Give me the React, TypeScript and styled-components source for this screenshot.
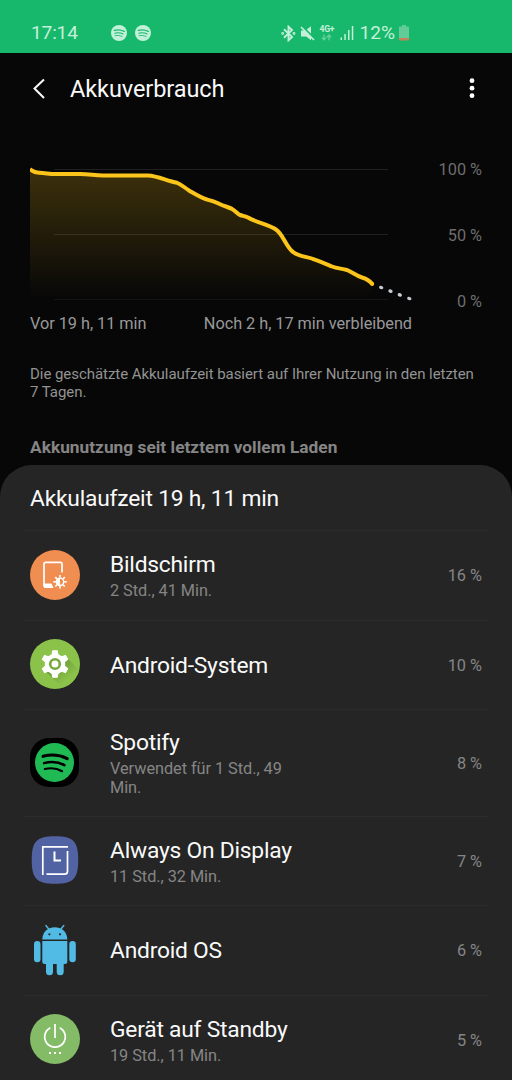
import React from 'react';
import styled, { createGlobalStyle } from 'styled-components';

const GlobalStyle = createGlobalStyle`
  * { box-sizing: border-box; }
  html, body { margin: 0; background: #070707; overflow: hidden; }
  body { font-family: Roboto, "Liberation Sans", sans-serif; color: #fafafa; }
  svg { display: block; flex: none; }
`;

const Screen = styled.div`
  width: 512px;
  height: 1080px;
  overflow: hidden;
  background: #070707;
  display: flex;
  flex-direction: column;
`;

const StatusBar = styled.header`
  flex: none;
  height: 53px;
  padding: 13px 103px 0 31px;
  background: #18b86c;
  color: #c3f0d8;
  display: flex;
  align-items: center;
`;

const StatusText = styled.span<{ $spacing?: number }>`
  font-size: 19.2px;
  letter-spacing: ${(p) => p.$spacing ?? 0}px;
  line-height: 24px;
  white-space: nowrap;
`;

const Notifications = styled.div`
  display: flex;
  gap: 8px;
  margin-left: 33px;
`;

const StatusIcons = styled.div`
  display: flex;
  align-items: center;
  gap: 4px;
  margin-left: auto;
`;

const Network = styled.div`
  display: flex;
  flex-direction: column;
  align-items: center;
  width: 15px;
  margin-right: 2px;
  font-size: 8.6px;
  font-weight: 700;
  letter-spacing: -0.3px;
  line-height: 9px;
`;

const AppBar = styled.div`
  flex: none;
  height: 72px;
  padding: 0 36px 0 32px;
  display: flex;
  align-items: center;
`;

const Title = styled.h1`
  flex: 1;
  margin: 0 0 0 24px;
  font-size: 23.5px;
  font-weight: 400;
  letter-spacing: -0.08px;
  line-height: 30px;
`;

const ChartSection = styled.section`
  flex: none;
  height: 187px;
  padding: 35px 30px 0;
`;

const Chart = styled.div`
  display: flex;
  justify-content: space-between;
`;

const Scale = styled.div`
  display: flex;
  flex-direction: column;
  justify-content: space-between;
  height: 152px;
  text-align: right;
  font-size: 16.3px;
  line-height: 20px;
  color: #6d6d6d;
`;

const TimeAxis = styled.div`
  display: flex;
  justify-content: space-between;
  width: 382px;
  margin-top: 2px;
  font-size: 16.3px;
  letter-spacing: -0.03px;
  line-height: 20px;
  color: #999;
  white-space: nowrap;
`;

const Note = styled.p`
  flex: none;
  height: 36px;
  margin: 53px 30px 0;
  font-size: 15px;
  letter-spacing: -0.05px;
  line-height: 18px;
  color: #939393;
`;

const SectionTitle = styled.h2`
  flex: none;
  margin: 36px 30px 8px;
  font-size: 17.3px;
  font-weight: 700;
  letter-spacing: 0.02px;
  line-height: 20px;
  color: #858585;
`;

const Panel = styled.section`
  flex: none;
  height: 630px;
  padding: 0 24px;
  background: #252525;
  border-radius: 32px 32px 0 0;
`;

const PanelTitle = styled.h3`
  height: 65px;
  margin: 0;
  padding: 0 6px;
  font-size: 22.8px;
  font-weight: 400;
  letter-spacing: -0.21px;
  line-height: 67px;
`;

const Row = styled.div<{ $height: number }>`
  height: ${(p) => p.$height}px;
  padding: 0 6px 2px;
  border-top: 1px solid #2b2b2b;
  display: flex;
  align-items: center;
`;

const RowText = styled.div`
  width: 200px;
  margin-left: 30px;
  padding-top: 1px;
`;

const RowName = styled.div`
  font-size: 22.8px;
  letter-spacing: -0.22px;
  line-height: 29px;
  white-space: nowrap;

  &:only-child {
    padding-top: 1px;
  }
`;

const RowDetail = styled.div`
  width: 180px;
  font-size: 16.3px;
  letter-spacing: -0.04px;
  line-height: 19px;
  padding-top: 2px;
  color: #858585;
`;

const Percent = styled.div`
  margin-left: auto;
  padding-top: 2px;
  font-size: 16.3px;
  color: #858585;
`;

function SpotifyMark({ size, disc, waves }: { size: number; disc: string; waves: string }) {
  return (
    <svg width={size} height={size} viewBox="0 0 38 38">
      <circle cx="19" cy="19" r="19" fill={disc} />
      <g fill="none" stroke={waves} strokeLinecap="round">
        <path d="M7.800 13C15.500 10.900 24.500 11.700 31.400 15.200" strokeWidth="3" />
        <path d="M8.800 19.600C15.500 17.700 23 18.500 28.700 21.500" strokeWidth="2.500" />
        <path d="M9.600 25.400C15.500 24 21.600 24.700 26.400 27.500" strokeWidth="2.100" />
      </g>
    </svg>
  );
}

function BluetoothIcon() {
  return (
    <svg width="15" height="17" viewBox="0 0 15 17" fill="none" stroke="currentColor" strokeWidth="1.900">
      <path d="M3 4.300 11 11.900 7.500 15.300V1.700L11 5.100 3 12.700" />
      <circle cx="1.700" cy="8.500" r=".5" />
      <circle cx="13" cy="8.500" r=".5" />
    </svg>
  );
}

function MuteIcon() {
  return (
    <svg width="15" height="17" viewBox="0 0 15 17" fill="currentColor">
      <path d="M1 5.500H4.300L11 12V15.200L6.200 11.500H1Z" />
      <path d="M6.700 4.600 11 1.300V8.700Z" />
      <path d="M1 2 14 15" fill="none" stroke="currentColor" strokeWidth="1.700" />
    </svg>
  );
}

function DataArrows() {
  return (
    <svg width="11" height="7" viewBox="0 0 11 7" fill="none" stroke="#68d09c" strokeWidth="1.300">
      <path d="M3 .5V5.700M.8 3.600 3 5.800 5.200 3.600M8 6.300V1M5.800 3.200 8 1 10.200 3.200" />
    </svg>
  );
}

function SignalIcon() {
  return (
    <svg width="15" height="16" viewBox="0 0 15 16" fill="currentColor">
      <path d="M.5 12.500H2V15H.5ZM4.300 9H5.800V15H4.300ZM8 5H9.500V15H8ZM11.800 1H13.300V15H11.800Z" />
    </svg>
  );
}

function BatteryIcon() {
  return (
    <svg width="10" height="16" viewBox="0 0 10 16">
      <path d="M3 0H7V1.500H9Q10 1.500 10 2.500V13H0V2.500Q0 1.500 1 1.500H3Z" fill="#62cb98" />
      <path d="M0 13H10V14.500Q10 15.500 9 15.500H1Q0 15.500 0 14.500Z" fill="#c9805a" />
    </svg>
  );
}

function DischargeChart() {
  const curve =
    'M30 169.200C32 170.500 33 172.500 39 172.800 47 173.300 50 174 56 174H80C90 174 94 175.500 103 175.500H148C158 176 166 180.500 177 182.800 181 184 185 188 189 190.500 195 194 200 197.300 207 199.500 212 200.800 214 201.300 218 203.200 224 206.500 229 207 232 209 235 210.500 237 213.500 240 215 243 216 245 216 248 217.500 256 222.500 268 224 276 229.500 283 234 286 247 293 252 299 256.700 308 256.800 314 259.300 319 260.800 324 263 332 266.500 337 268.500 342 268.500 347 270 352 272 356 275.500 362 277.500 367 279 370 281 372.200 284';
  return (
    <svg width="388" height="142" viewBox="30 160 388 142">
      <defs>
        <linearGradient id="charge" x1="0" y1="169" x2="0" y2="299" gradientUnits="userSpaceOnUse">
          <stop offset="0" stopColor="#fdc51b" stopOpacity=".22" />
          <stop offset="1" stopColor="#fdc51b" stopOpacity="0" />
        </linearGradient>
      </defs>
      <path d={`${curve}V299H30Z`} fill="url(#charge)" />
      <path d="M54 169.500H388M54 234.500H388" stroke="#fff" strokeOpacity=".1" />
      <path d="M54 299.500H388" stroke="#fff" strokeOpacity=".06" />
      <path d={curve} fill="none" stroke="#fcc51c" strokeWidth="4" strokeLinejoin="round" />
      <circle cx="372.200" cy="284" r="2" fill="#fcc51c" />
      <g fill="#c9ccd4">
        <ellipse cx="381.200" cy="287.500" rx="2.200" ry="1.700" transform="rotate(20 381.200 287.500)" />
        <ellipse cx="390.500" cy="291.200" rx="2.200" ry="1.700" transform="rotate(20 390.500 291.200)" />
        <ellipse cx="399.800" cy="294.900" rx="2.200" ry="1.700" transform="rotate(20 399.800 294.900)" />
        <ellipse cx="409.300" cy="298.500" rx="2.200" ry="1.700" transform="rotate(20 409.300 298.500)" />
      </g>
    </svg>
  );
}

function ScreenIcon() {
  const rays = [0, 45, 90, 135, 180, 225, 270, 315];
  return (
    <svg width="50" height="50" viewBox="0 0 50 50">
      <circle cx="25" cy="25" r="25" fill="#f08d50" />
      <path d="M32 22.500V14Q32 12.300 30.300 12.300H15.700Q14 12.300 14 14V35.300Q14 37 15.700 37H22" fill="none" stroke="#fff" strokeWidth="1.700" />
      <path d="M14 33.500H21.500L23.500 38H15.500Q14 38 14 36.500Z" fill="#fff" />
      <circle cx="30" cy="31.800" r="3.700" fill="none" stroke="#fff" strokeWidth="1.400" />
      <path d="M30 28.100A3.700 3.700 0 0 0 30 35.500Z" fill="#fff" />
      <g stroke="#fff" strokeWidth="1.600">
        {rays.map((angle) => (
          <path key={angle} d="M30 25.100V27.600" transform={`rotate(${angle} 30 31.800)`} />
        ))}
      </g>
    </svg>
  );
}

function SystemIcon() {
  const teeth = [0, 60, 120, 180, 240, 300];
  return (
    <svg width="50" height="50" viewBox="0 0 50 50">
      <defs>
        <clipPath id="system-disc"><circle cx="25" cy="25" r="25" /></clipPath>
        <linearGradient id="system-shade" x1="25" y1="28" x2="36" y2="42" gradientUnits="userSpaceOnUse">
          <stop offset="0" stopColor="#6f9f3b" />
          <stop offset="1" stopColor="#8bc34a" />
        </linearGradient>
      </defs>
      <circle cx="25" cy="25" r="25" fill="#8bc34a" />
      <path d="M14 31 36 18 54 36V54H38Z" fill="url(#system-shade)" clipPath="url(#system-disc)" />
      <g fill="#fff" stroke="#fff" strokeLinejoin="round">
        <circle cx="25" cy="25" r="10.300" stroke="none" />
        {teeth.map((angle) => (
          <path key={angle} d="M22.700 11.700H27.300L28.200 17H21.800Z" transform={`rotate(${angle} 25 25)`} />
        ))}
      </g>
      <circle cx="25" cy="25" r="4.800" fill="#fff" stroke="#75a83e" strokeWidth="2.600" />
    </svg>
  );
}

const SpotifyTile = styled.div`
  display: flex;
  align-items: center;
  justify-content: center;
  width: 49px;
  height: 49px;
  margin-right: 1px;
  border-radius: 19px;
  background: #000;
`;

function DisplayIcon() {
  return (
    <svg width="50" height="50" viewBox="0 0 50 50">
      <path d="M25 1.300C43 1.300 48.200 6 48.200 25S43 48.700 25 48.700 1.700 44 1.700 25 7 1.300 25 1.300Z" fill="#5163a2" />
      <g fill="none" stroke="#fff" strokeWidth="1.700">
        <path d="M12.800 40V11.800H38" />
        <path d="M16.500 39.200H34.500Q37.500 39.200 37.500 36.200V16" />
        <path d="M24.500 16.500V25.600H31" strokeWidth="2" />
      </g>
    </svg>
  );
}

function RobotIcon() {
  return (
    <svg width="50" height="52" viewBox="0 0 50 52" fill="#52bbe5">
      <path d="M12.300 15.500C12.300-1 37.300-1 37.300 15.500Z" />
      <path d="M18.700 5 15.900 1.500M31 5 33.800 1.500" stroke="#52bbe5" strokeWidth="1.400" strokeLinecap="round" />
      <circle cx="19.400" cy="10.300" r="1.100" fill="#252525" />
      <circle cx="30" cy="10.300" r="1.100" fill="#252525" />
      <path d="M12.300 17H37.300V37.500Q37.300 40 34.800 40H14.800Q12.300 40 12.300 37.500Z" />
      <rect x="4" y="17" width="6.500" height="21.300" rx="3.200" />
      <rect x="39.300" y="17" width="6.500" height="21.300" rx="3.200" />
      <rect x="16" y="36" width="7" height="15.300" rx="3.500" />
      <rect x="26.700" y="36" width="7" height="15.300" rx="3.500" />
    </svg>
  );
}

function StandbyIcon() {
  return (
    <svg width="50" height="50" viewBox="0 0 50 50">
      <circle cx="25" cy="25" r="25" fill="#84bb67" />
      <g fill="none" stroke="#fff" strokeWidth="1.700">
        <path d="M25 10V24" />
        <path d="M20.300 13.700A10.300 10.300 0 1 0 29.700 13.700" />
      </g>
      <g fill="#fff">
        <rect x="19" y="38" width="2" height="2" />
        <rect x="24" y="38" width="2" height="2" />
        <rect x="29" y="38" width="2" height="2" />
      </g>
    </svg>
  );
}

const consumers = [
  { name: 'Bildschirm', detail: '2 Std., 41 Min.', percent: 16, height: 90, icon: <ScreenIcon /> },
  { name: 'Android-System', percent: 10, height: 89, icon: <SystemIcon /> },
  {
    name: 'Spotify',
    detail: 'Verwendet für 1 Std., 49 Min.',
    percent: 8,
    height: 107,
    icon: (
      <SpotifyTile>
        <SpotifyMark size={39} disc="#20ba55" waves="#000" />
      </SpotifyTile>
    ),
  },
  { name: 'Always On Display', detail: '11 Std., 32 Min.', percent: 7, height: 89, icon: <DisplayIcon /> },
  { name: 'Android OS', percent: 6, height: 90, icon: <RobotIcon /> },
  { name: 'Gerät auf Standby', detail: '19 Std., 11 Min.', percent: 5, height: 89, icon: <StandbyIcon /> },
];

export default function App() {
  return (
    <Screen>
      <GlobalStyle />
      <StatusBar>
        <StatusText $spacing={-0.2}>17:14</StatusText>
        <Notifications>
          <SpotifyMark size={16} disc="#c3f0d8" waves="#18b86c" />
          <SpotifyMark size={16} disc="#c3f0d8" waves="#18b86c" />
        </Notifications>
        <StatusIcons>
          <BluetoothIcon />
          <MuteIcon />
          <Network>
            4G+
            <DataArrows />
          </Network>
          <SignalIcon />
          <StatusText>12%</StatusText>
          <BatteryIcon />
        </StatusIcons>
      </StatusBar>

      <AppBar>
        <svg width="14" height="22" viewBox="0 0 14 22" fill="none" stroke="#fafafa" strokeWidth="2">
          <path d="M12 1.500 2.500 10.500 12 20" />
        </svg>
        <Title>Akkuverbrauch</Title>
        <svg width="8" height="22" viewBox="0 0 8 22" fill="#fff">
          <circle cx="4" cy="2.700" r="2.400" />
          <circle cx="4" cy="10.200" r="2.400" />
          <circle cx="4" cy="17.700" r="2.400" />
        </svg>
      </AppBar>

      <ChartSection>
        <Chart>
          <DischargeChart />
          <Scale>
            <span>100 %</span>
            <span>50 %</span>
            <span>0 %</span>
          </Scale>
        </Chart>
        <TimeAxis>
          <span>Vor 19 h, 11 min</span>
          <span>Noch 2 h, 17 min verbleibend</span>
        </TimeAxis>
      </ChartSection>

      <Note>Die geschätzte Akkulaufzeit basiert auf Ihrer Nutzung in den letzten 7 Tagen.</Note>
      <SectionTitle>Akkunutzung seit letztem vollem Laden</SectionTitle>

      <Panel>
        <PanelTitle>Akkulaufzeit 19 h, 11 min</PanelTitle>
        {consumers.map((item) => (
          <Row key={item.name} $height={item.height}>
            {item.icon}
            <RowText>
              <RowName>{item.name}</RowName>
              {item.detail && <RowDetail>{item.detail}</RowDetail>}
            </RowText>
            <Percent>{item.percent} %</Percent>
          </Row>
        ))}
      </Panel>
    </Screen>
  );
}
